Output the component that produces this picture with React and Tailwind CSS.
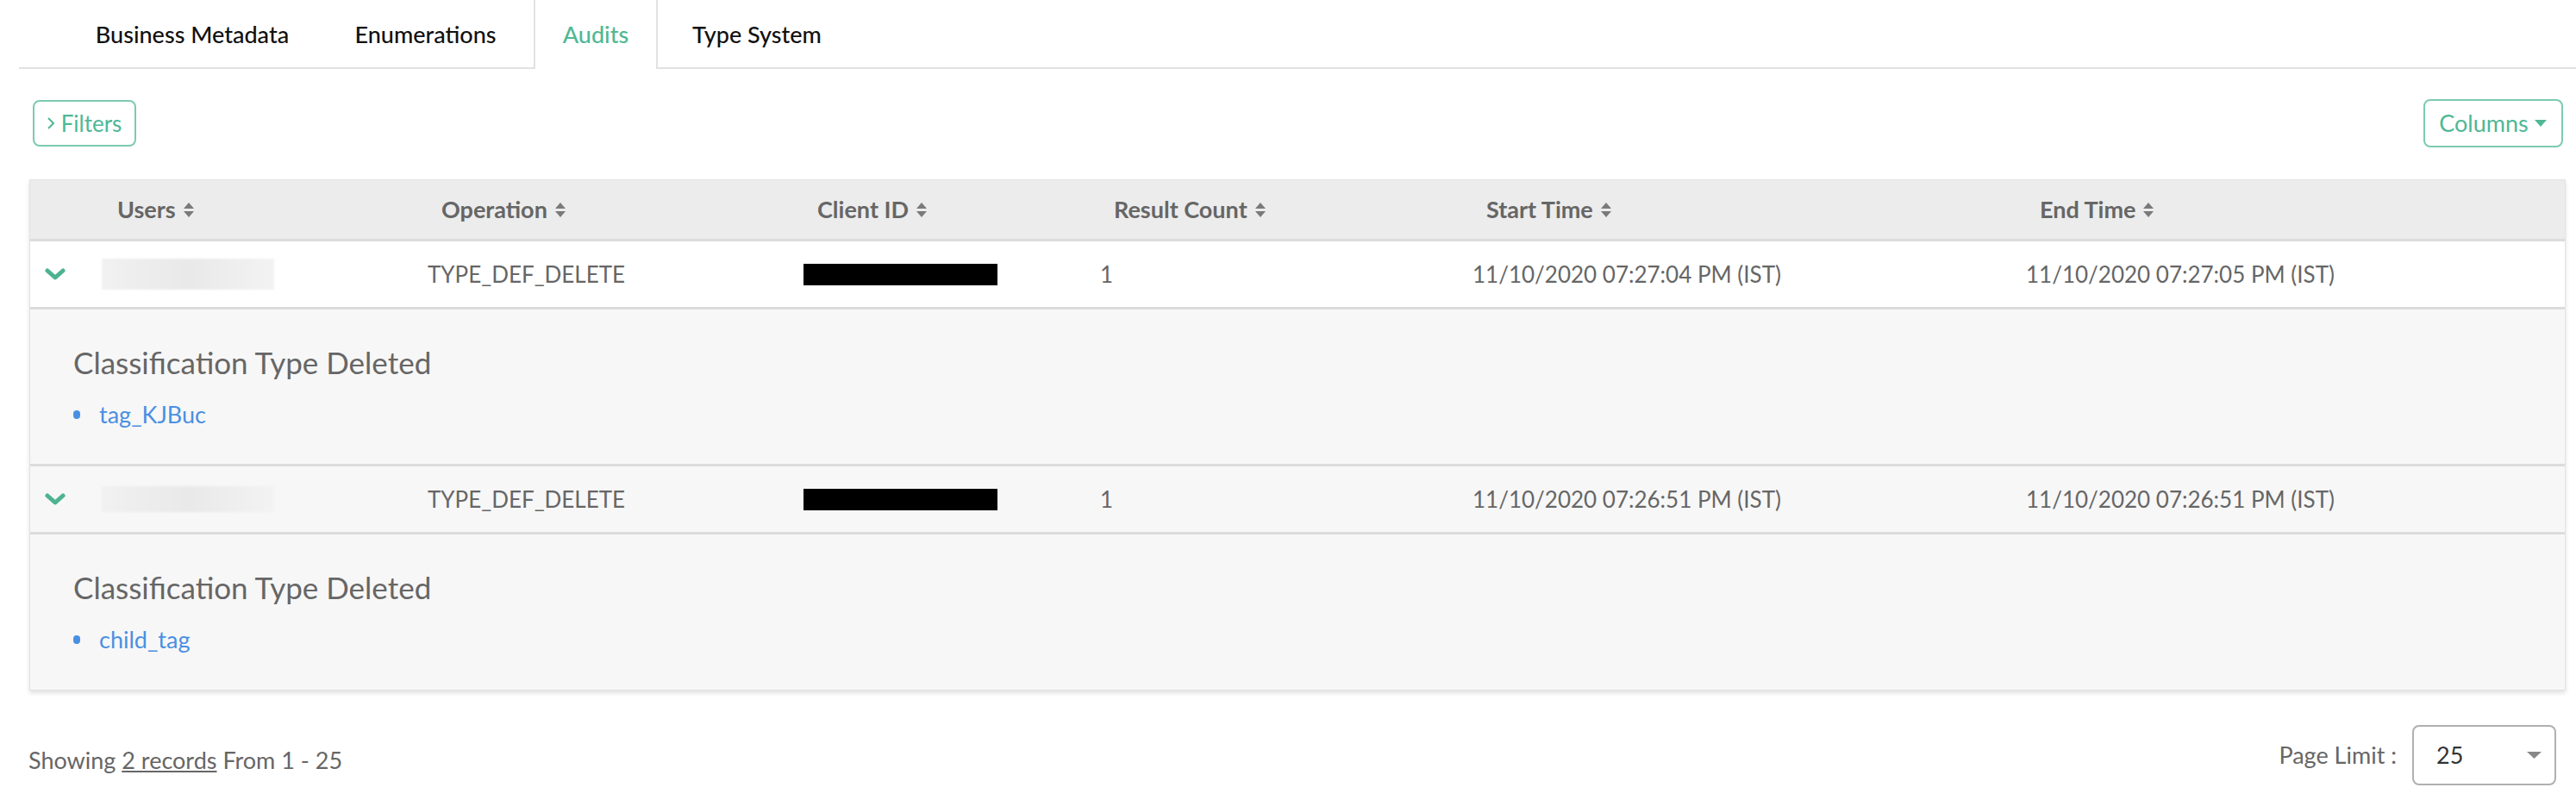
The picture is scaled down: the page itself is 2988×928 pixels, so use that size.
import React from 'react';

const cols = 'grid grid-cols-[69px_376px_436px_344px_432px_642px_1fr]';

const rows = [
  { bg: 'bg-white', start: '11/10/2020 07:27:04 PM (IST)', end: '11/10/2020 07:27:05 PM (IST)', tag: 'tag_KJBuc', blurH: 'h-[36px]' },
  { bg: 'bg-[#f7f7f7]', start: '11/10/2020 07:26:51 PM (IST)', end: '11/10/2020 07:26:51 PM (IST)', tag: 'child_tag', blurH: 'h-[30px]' },
];

function SortIcon() {
  return (
    <svg width="14" height="17" viewBox="0 0 14 17" className="ml-[8px] shrink-0">
      <path d="M7 0 L13 7 L1 7 Z" fill="#7a7a7a" />
      <path d="M1 10 L13 10 L7 17 Z" fill="#7a7a7a" />
    </svg>
  );
}

function Chevron() {
  return (
    <svg width="24" height="14" viewBox="0 0 24 14">
      <polyline points="3,3 12,11 21,3" fill="none" stroke="#4db391" strokeWidth="5" strokeLinecap="round" strokeLinejoin="round" />
    </svg>
  );
}

export default function App() {
  const tabs = [
    { label: 'Business Metadata', w: 'w-[290px]' },
    { label: 'Enumerations', w: 'w-[239px]' },
    { label: 'Audits', w: 'w-[144px]', active: true },
    { label: 'Type System', w: 'w-[218px]' },
  ];
  const headers = ['Users', 'Operation', 'Client ID', 'Result Count', 'Start Time', 'End Time'];

  return (
    <div className="min-h-screen w-full bg-white text-[#666] font-['Lato',sans-serif]">
      {/* tabs */}
      <div className="pl-[22px]">
        <div className="flex items-end h-[80px] border-b-2 border-[#e2e2e2] pl-[56px] gap-[6px]">
          {tabs.map((t) => (
            <div
              key={t.label}
              className={`${t.w} h-[80px] -mb-[2px] flex items-center justify-center text-[27px] font-medium ${
                t.active
                  ? 'bg-white border-x-2 border-[#e2e2e2] text-[#4fb894]'
                  : 'text-[#111]'
              }`}
            >
              {t.label}
            </div>
          ))}
        </div>
      </div>

      <div className="pl-[34px] pr-[12px]">
        {/* filter row */}
        <div className="flex justify-between items-center mt-[35px] pr-[3px]">
          <button className="ml-[4px] h-[54px] w-[120px] border-2 border-[#7ccbae] rounded-[8px] flex items-center justify-center gap-[8px] text-[#4fb894] text-[26px]">
            <svg width="8" height="14" viewBox="0 0 8 14">
              <polyline points="1,1 7,7 1,13" fill="none" stroke="#4fb894" strokeWidth="2" />
            </svg>
            Filters
          </button>
          <button className="h-[56px] w-[162px] border-2 border-[#7ccbae] rounded-[8px] flex items-center justify-center gap-[6px] text-[#4fb894] text-[27px]">
            Columns
            <svg width="16" height="10" viewBox="0 0 16 10">
              <path d="M1 1 L15 1 L8 9 Z" fill="#4fb894" />
            </svg>
          </button>
        </div>

        {/* table */}
        <div className="mt-[37px] border border-[#e3e3e3] shadow-[0_3px_5px_rgba(0,0,0,0.12)]">
          <div className={`${cols} h-[71px] bg-[#ececec] border-b-[3px] border-[#dcdcdc] items-center text-[27px] font-bold text-[#666]`}>
            <div />
            {headers.map((h) => (
              <div key={h} className="pl-[32px] flex items-center">
                {h}
                <SortIcon />
              </div>
            ))}
          </div>

          {rows.map((r, i) => (
            <div key={r.tag}>
              <div className={`${cols} h-[79px] ${r.bg} border-b-[3px] border-[#dcdcdc] items-center text-[26px] text-[#666]`}>
                <div className="pl-[17px] flex items-center">
                  <Chevron />
                </div>
                <div className="pl-[14px]">
                  <div className={`w-[200px] ${r.blurH} bg-gradient-to-r from-[#f1f1f1] via-[#e9e9e9] to-[#f3f3f3] blur-[1px]`} />
                </div>
                <div className="pl-[16px]">TYPE_DEF_DELETE</div>
                <div className="pl-[16px]">
                  <div className="w-[225px] h-[25px] bg-black" />
                </div>
                <div className="pl-[16px]">1</div>
                <div className="pl-[16px]">{r.start}</div>
                <div className="pl-[16px]">{r.end}</div>
              </div>
              <div
                className={`bg-[#f7f7f7] pl-[50px] pt-[40px] ${
                  i === 0 ? 'h-[182px] border-b-[3px] border-[#dcdcdc]' : 'h-[180px]'
                }`}
              >
                <div className="text-[35px] text-[#666] leading-[42px]">Classification Type Deleted</div>
                <div className="mt-[20px] flex items-center gap-[22px] text-[27px] text-[#4a90e2]">
                  <span className="w-[8px] h-[10px] rounded-full bg-[#4a90e2]" />
                  <span>{r.tag}</span>
                </div>
              </div>
            </div>
          ))}
        </div>

        {/* footer */}
        <div className="flex justify-between items-center mt-[40px] pr-[11px]">
          <div className="text-[27px] text-[#666] -ml-[1px] mt-[12px]">
            Showing <span className="underline">2 records</span> From 1 - 25
          </div>
          <div className="flex items-center gap-[18px]">
            <span className="text-[27px] text-[#666]">Page Limit :</span>
            <div className="w-[167px] h-[70px] border-2 border-[#b0b0b0] rounded-[8px] flex items-center justify-between pl-[26px] pr-[15px] text-[27px] text-[#333]">
              25
              <svg width="17" height="8" viewBox="0 0 17 8">
                <path d="M0 0 L17 0 L8.5 8 Z" fill="#888" />
              </svg>
            </div>
          </div>
        </div>
      </div>
    </div>
  );
}
